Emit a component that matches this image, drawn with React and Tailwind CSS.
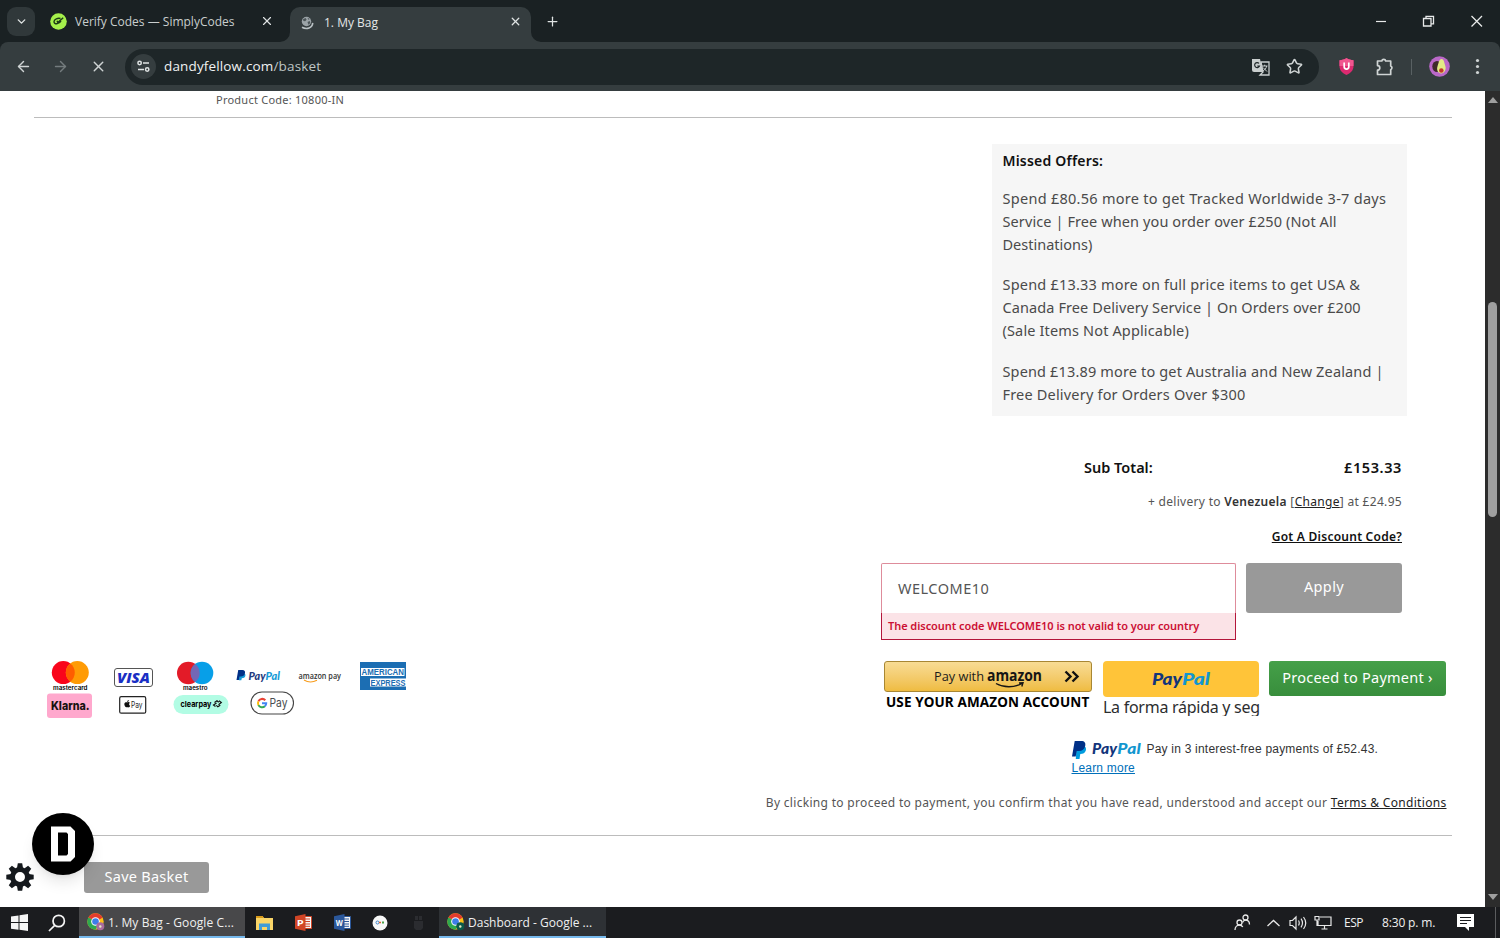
import { ChevronDown, X, Plus, ArrowLeft, ArrowRight, Star } from 'lucide-react'

const offers = [
  {
    id: 1,
    lines: [
      ['Spend £80.56 more to get Tracked Worldwide 3-7 days', 'tracking-[0.28px]'],
      ['Service | Free when you order over £250 (Not All', 'tracking-[0.1px]'],
      ['Destinations)', 'tracking-[0px]'],
    ],
  },
  {
    id: 2,
    lines: [
      ['Spend £13.33 more on full price items to get USA &', 'tracking-[0.2px]'],
      ['Canada Free Delivery Service | On Orders over £200', 'tracking-[0.1px]'],
      ['(Sale Items Not Applicable)', 'tracking-[0.15px]'],
    ],
  },
  {
    id: 3,
    lines: [
      ['Spend £13.89 more to get Australia and New Zealand |', 'tracking-[0.15px]'],
      ['Free Delivery for Orders Over $300', 'tracking-[0.19px]'],
    ],
  },
]

function TitleBar() {
  return (
    <div className="flex h-[42px] bg-[#1a2123] text-[12px] text-[#dfe3e3]">
      <div className="ml-[7px] mt-[7px] flex h-[29px] w-[28px] items-center justify-center rounded-[9px] bg-[#30383a]">
        <ChevronDown size={13} strokeWidth={2.6} />
      </div>
      <div className="ml-[15px] flex h-[42px] w-[240px] items-center">
        <svg width="17" height="17" viewBox="0 0 17 17">
          <circle cx="8.5" cy="8.5" r="8.3" fill="#a5f04b" />
          <path d="M10.500 5.500C8 4.800 4 6 4 8.800c0 3 5.300 2.600 7-.8M7 7.800l.8 1.800 5.400-4.800" fill="none" stroke="#1c3a16" strokeWidth="1.4" />
        </svg>
        <span className="ml-[8px] mt-[2px] w-[185px] whitespace-nowrap text-[#c9cece]">Verify Codes — SimplyCodes</span>
        <X size={14} strokeWidth={2} />
      </div>
      <div className="relative mt-[7px] flex h-[35px] w-[241px] items-center rounded-t-[10px] bg-[#353d3f] pb-[6px]">
        <svg className="absolute -left-[10px] bottom-0" width="10" height="10" viewBox="0 0 10 10">
          <path d="M10 0v10H0A10 10 0 0 0 10 0" fill="#353d3f" />
        </svg>
        <svg className="absolute -right-[10px] bottom-0" width="10" height="10" viewBox="0 0 10 10">
          <path d="M0 0v10h10A10 10 0 0 1 0 0" fill="#353d3f" />
        </svg>
        <svg className="ml-[11px] mt-[3px]" width="13" height="14" viewBox="0 0 13 14">
          <circle cx="5.5" cy="5.5" r="4.7" fill="#9ba3a7" />
          <path d="M2 3.3l2.6-1.2 1 1.6-1.5 1.6-1.7-.3zM6.5 6l2.2-1 .6 2-1.8 1.8zM6.5 1.7l2.2 1.3-1.3.7z" fill="#4c5558" />
          <path d="M1 11.3c4.6 2.6 10.5.7 10.7-4.4" fill="none" stroke="#b9c1c4" strokeWidth="1.6" />
        </svg>
        <span className="ml-[10px] mt-[3px] w-[185px] text-[#e4e7e7]">1. My Bag</span>
        <X size={13} strokeWidth={2.4} />
      </div>
      <div className="ml-[14px] flex h-[42px] flex-1 items-center">
        <Plus size={15} strokeWidth={2} />
      </div>
      <svg className="mr-[17px] mt-[14px]" width="108" height="14" viewBox="0 0 108 14" fill="none" stroke="#e8eaea">
        <path d="M1 7.5h10" strokeWidth="1.2" />
        <path d="M48.500 4.500h7.500v7.500h-7.500z" strokeWidth="1.3" />
        <path d="M51 4.500V2.300h7.500v7.500H56" strokeWidth="1.3" />
        <path d="M96.500 2l10.500 10.500M107 2L96.500 12.500" strokeWidth="1.3" />
      </svg>
    </div>
  )
}

function ToolBar() {
  return (
    <div className="bg-[#1a2123]">
      <div className="flex h-[49px] items-center rounded-t-[8px] bg-[#353d3f] text-[#cfd4d4]">
        <ArrowLeft className="ml-[15px]" size={17} strokeWidth={2} />
        <ArrowRight className="ml-[20px] text-[#747c7e]" size={17} strokeWidth={2} />
        <X className="ml-[21px]" size={17} strokeWidth={2} />
        <div className="ml-[18px] flex h-[36px] w-[1194px] items-center rounded-full bg-[#1e2628]">
          <div className="ml-[6px] flex size-[25px] items-center justify-center rounded-full bg-[#353d3f]">
            <svg width="13" height="13" viewBox="0 0 13 13" fill="none" stroke="#dfe3e3" strokeWidth="1.5">
              <circle cx="2.600" cy="3" r="1.700" />
              <path d="M6 3h6M1 9.500h6" />
              <circle cx="10.200" cy="9.500" r="1.700" />
            </svg>
          </div>
          <span className="ml-[8px] flex-1 text-[13.5px] tracking-[0.15px] text-[#f0f2f2]">
            dandyfellow.com<span className="text-[#bfc5c5]">/basket</span>
          </span>
          <svg className="mr-[16px]" width="19" height="18" viewBox="0 0 19 18">
            <path d="M1 1h8l3 13H3a2 2 0 0 1-2-2z" fill="#c9cece" />
            <path d="M10 4h8v13H9l3-3z" fill="none" stroke="#c9cece" strokeWidth="1.300" />
            <path d="M8 5.300A2.500 2.500 0 1 0 8.500 8H6.300" fill="none" stroke="#1e2628" strokeWidth="1.200" />
            <path d="M11 8h5.500M13.700 6.700V8M15.700 8c-.5 2.500-2 4-3.700 5M12 9.500l4 4" fill="none" stroke="#c9cece" strokeWidth="1" />
          </svg>
          <Star className="mr-[16px]" size={17} strokeWidth={2.2} strokeLinejoin="miter" />
        </div>
        <svg className="ml-[20px]" width="15" height="17" viewBox="0 0 15 17">
          <path d="M7.500 0C5.500 1.500 3 2 .5 2.300V8c0 4.600 3 7.300 7 9 4-1.700 7-4.400 7-9V2.300C12 2 9.500 1.500 7.500 0" fill="#dc2a70" />
          <path d="M7.500 0C5.500 1.500 3 2 .5 2.300V8h14V2.300C12 2 9.500 1.500 7.500 0" fill="#f0568f" />
          <path d="M5.200 4.500v4.300a2.300 2.300 0 0 0 4.600 0V4.500" fill="none" stroke="#fff" strokeWidth="1.700" />
        </svg>
        <svg className="ml-[22px]" width="19" height="18" viewBox="0 0 19 18">
          <path d="M1.500 3h4.300a2 2 0 0 1 3.900 0h5v5a2 2 0 0 1 0 3.700v4.800H1.500v-4.300a2.300 2.300 0 0 0 0-4.600z" fill="none" stroke="#cfd4d4" strokeWidth="1.700" strokeLinejoin="round" />
        </svg>
        <div className="ml-[16px] h-[16px] w-px bg-[#596163]" />
        <svg className="ml-[17px]" width="21" height="21" viewBox="0 0 21 21">
          <circle cx="10.500" cy="10.500" r="10.300" fill="#ba68c8" />
          <ellipse cx="8" cy="10.500" rx="4.700" ry="5.500" fill="#3f2a2a" />
          <path d="M12.500 3c2.500 0 2.600 3.400 3.700 6.500 1.500 4-1 8-4 8-3.200 0-5-3.800-3.600-7.500C9.700 7 10 3 12.500 3" fill="#e3ec86" />
          <circle cx="12.300" cy="14.500" r="2.300" fill="#c5392b" />
        </svg>
        <svg className="ml-[25px]" width="5" height="17" viewBox="0 0 5 17" fill="#cfd4d4">
          <circle cx="2.500" cy="2.500" r="1.600" />
          <circle cx="2.500" cy="8.500" r="1.600" />
          <circle cx="2.500" cy="14.500" r="1.600" />
        </svg>
      </div>
    </div>
  )
}

function PayPalMark({ className }) {
  return (
    <svg className={className} viewBox="0 0 14 18">
      <path d="M4.500 5h6c3 0 4 2 3.300 4.500-.7 2.500-2.700 3.500-5.500 3.500L7.500 18H3.800z" fill="#009cde" />
      <path d="M2.700 0h6.500c3.500 0 4.700 2 4 5C12.500 8.500 10 10 7 10H4.800L3.700 15.500H0z" fill="#003087" />
    </svg>
  )
}

function PayPalWord({ className }) {
  return (
    <svg className={className} viewBox="0 0 58 19" fontFamily="Lato" fontSize="17" fontWeight="900" fontStyle="italic" overflow="visible">
      <text x="0" y="15" textLength="30" lengthAdjust="spacingAndGlyphs" fill="#12357b">Pay</text>
      <text x="30" y="15" textLength="28" lengthAdjust="spacingAndGlyphs" fill="#1296cf">Pal</text>
    </svg>
  )
}

function CardLogos() {
  return (
    <svg className="-mt-px" width="362" height="60" viewBox="46 660 362 60" fontFamily="Inter, sans-serif">
      <circle cx="63.300" cy="672.600" r="11.500" fill="#f9051b" />
      <circle cx="77.300" cy="672.600" r="11.500" fill="#ff9b05" />
      <path d="M70.300 663.500a11.500 11.500 0 0 1 0 18.200 11.500 11.500 0 0 1 0-18.200" fill="#ff5d00" />
      <text x="53" y="689.500" fontSize="5.500" fontWeight="600" textLength="34.500" lengthAdjust="spacingAndGlyphs">mastercard</text>

      <rect x="114.500" y="668.500" width="38" height="18" rx="2.500" fill="#fff" stroke="#555" />
      <text x="117" y="682.500" fontSize="14" fontWeight="800" fontStyle="italic" fontFamily="Open Sans" textLength="33" lengthAdjust="spacingAndGlyphs" fill="#1a2fc4">VISA</text>

      <circle cx="188.300" cy="673" r="11.300" fill="#e31b28" />
      <circle cx="202" cy="673" r="11.300" fill="#079fe8" />
      <path d="M195.200 664a11.300 11.300 0 0 1 0 18 11.300 11.300 0 0 1 0-18" fill="#7467b5" />
      <text x="183" y="689.500" fontSize="5.500" fontWeight="600" textLength="24.500" lengthAdjust="spacingAndGlyphs">maestro</text>

      <g transform="translate(236.500 670) scale(.64)">
        <path d="M4.500 5h6c3 0 4 2 3.300 4.500-.7 2.500-2.700 3.500-5.500 3.500L7.500 16H3.800z" fill="#179bd7" />
        <path d="M2.700 0h6.500c3.500 0 4.700 2 4 5C12.500 8.500 10 10 7 10H4.800L3.700 15.500H0z" fill="#003087" />
      </g>
      <g fontFamily="Lato" fontSize="10.500" fontWeight="900" fontStyle="italic">
        <text x="248.500" y="680" textLength="17" lengthAdjust="spacingAndGlyphs" fill="#253b80">Pay</text>
        <text x="265.500" y="680" textLength="14.500" lengthAdjust="spacingAndGlyphs" fill="#179bd7">Pal</text>
      </g>

      <text x="298.500" y="678.500" fontSize="8.500" fontWeight="600" fontFamily="Open Sans" textLength="42.500" lengthAdjust="spacingAndGlyphs" fill="#333">amazon pay</text>
      <path d="M304 680c4 2.500 9 2.300 13 .3" fill="none" stroke="#f79c1c" strokeWidth="1.100" />

      <rect x="360" y="662" width="46" height="28" fill="#1c6eb3" />
      <path d="M361 668h43.500v8H361zM370 678.500h36v8h-36z" fill="#fff" />
      <g fontFamily="Liberation Sans" fontWeight="700" fontSize="8.500" fill="#1c6eb3">
        <text x="361.500" y="675" textLength="42.500" lengthAdjust="spacingAndGlyphs">AMERICAN</text>
        <text x="370.500" y="685.500" textLength="35" lengthAdjust="spacingAndGlyphs">EXPRESS</text>
      </g>

      <rect x="47" y="693.500" width="45" height="24.500" rx="3" fill="#ffa8cd" />
      <text x="51" y="710" fontSize="12" fontWeight="800" textLength="38.500" lengthAdjust="spacingAndGlyphs" fill="#17120f">Klarna.</text>

      <rect x="119.700" y="696.700" width="26" height="16.500" rx="1.500" fill="#fff" stroke="#222" strokeWidth="1.200" />
      <path d="M127.300 702.400c.8-.5 2-.4 2.600.3-1.200.8-1 2.400.3 3-.5 1.300-1.300 2-2.200 1.600-.5-.2-.9-.2-1.400 0-1 .4-2.700-1.900-2.200-3.800.4-1.200 1.800-1.600 2.900-1.100m-.2-.4c0-1 .7-1.900 1.700-2 .1 1-.7 2-1.700 2" fill="#111" />
      <text x="131" y="708" fontSize="8.500" textLength="11.500" lengthAdjust="spacingAndGlyphs" fill="#222">Pay</text>

      <rect x="173.500" y="695" width="55" height="19" rx="9.500" fill="#b2fce4" />
      <text x="180.500" y="707" fontSize="8" fontWeight="700" textLength="31" lengthAdjust="spacingAndGlyphs">clearpay</text>
      <path d="M214.500 702.500l2.500-1.700 1.700 1.400M219 700.800l2.300 1.700-2.800 2.200M220.300 705.200l-2.500 1.500-1.500-1.300M215.500 706.500l-2-1.500 3-2" fill="none" stroke="#111" strokeWidth="1.200" />

      <rect x="251" y="692" width="42.500" height="22" rx="11" fill="#fff" stroke="#444" strokeWidth="1.100" />
      <g fill="none" strokeWidth="2">
        <path d="M265.300 700.200a4.200 4.200 0 0 0-6.900 1.200" stroke="#ea4335" />
        <path d="M258.400 701.400a4.200 4.200 0 0 0 0 3.700" stroke="#fbbc04" />
        <path d="M258.400 705.100a4.200 4.200 0 0 0 6.500 1.200" stroke="#34a853" />
        <path d="M264.900 706.300a4.200 4.200 0 0 0 1.300-3h-4.200" stroke="#4285f4" />
      </g>
      <text x="269.500" y="707.300" fontSize="12" textLength="18" lengthAdjust="spacingAndGlyphs" fill="#4a4d50">Pay</text>
    </svg>
  )
}

function MissedOffers() {
  return (
    <div className="ml-[992px] mt-[26px] h-[272px] w-[415px] bg-[#f6f6f6] pl-[10.5px] pt-[5px] text-[14.5px] text-[#4a4a4a]">
      <p className="mb-[14.5px] h-[23px] text-[14px] font-semibold leading-[23px] tracking-[0.2px] text-[#111]">Missed Offers:</p>
      {offers.map((offer) => (
        <p key={offer.id} className="mb-[17.300px] leading-[23.100px]">
          {offer.lines.map(([line, tracking]) => (
            <span key={line} className={`block whitespace-nowrap ${tracking}`}>{line}</span>
          ))}
        </p>
      ))}
    </div>
  )
}

function Totals() {
  return (
    <div className="mr-[83px] flex flex-col items-end">
      <div className="mt-[41px] flex h-[21px] w-[318px] items-center justify-between text-[14.5px] font-semibold text-[#111]">
        <span className="tracking-[0px]">Sub Total:</span>
        <span className="tracking-[0.6px]">£153.33</span>
      </div>
      <p className="mt-[14px] h-[20px] text-[12px] leading-[20px] tracking-[0.31px] text-[#555]">
        + delivery to <b className="font-semibold text-[#333]">Venezuela</b> [<span className="text-[#222] underline">Change</span>] at £24.95
      </p>
      <p className="mt-[15px] h-[20px] text-[12px] font-semibold leading-[20px] tracking-[0.25px] text-[#111] underline">Got A Discount Code?</p>
      <div className="mt-[16px] flex gap-[10px]">
        <div className="w-[355px]">
          <div className="flex h-[50px] items-center rounded-t-[2px] border border-b-0 border-[#de8c9b] pl-[16px] text-[14.5px] tracking-[0.5px] text-[#555]">WELCOME10</div>
          <div className="h-[27px] border border-t-0 border-[#b3163a] bg-[#fbe3e7] pl-[6px] text-[11px] font-semibold leading-[26px] tracking-[-0.05px] text-[#cb1034]">
            The discount code WELCOME10 is not valid to your country
          </div>
        </div>
        <div className="flex h-[50px] w-[156px] items-center justify-center rounded-[3px] bg-[#999] pb-[2px] text-[14.5px] tracking-[0.4px] text-white">Apply</div>
      </div>
    </div>
  )
}

function PaymentRow() {
  return (
    <div className="mt-[21px] flex h-[62px] items-start pl-[46px]">
      <CardLogos />
      <div className="ml-[476px] w-[208px]">
        <div className="flex h-[31px] items-center rounded-[3px] border border-[#a88734] bg-linear-to-b from-[#f8dc94] to-[#efbc40] pl-[49px]">
          <svg width="148" height="26" viewBox="0 0 148 26" fontFamily="Open Sans">
            <text x="0" y="16.500" fontSize="12.500" fontWeight="500" textLength="50" lengthAdjust="spacingAndGlyphs" fill="#1b1b1b">Pay with</text>
            <text x="53" y="16.500" fontSize="15.500" fontWeight="700" textLength="55" lengthAdjust="spacingAndGlyphs" fill="#151515">amazon</text>
            <path d="M62 19.500c8 4.500 18 4.200 26 0M85 19l4-.3-1.200 3.800" fill="none" stroke="#151515" strokeWidth="1.400" />
            <path d="M131.500 7.500l5 5-5 5M138.500 7.500l5 5-5 5" fill="none" stroke="#111" strokeWidth="2.400" />
          </svg>
        </div>
        <p className="pl-[2px] text-[13.5px] font-bold leading-[20px] tracking-[0.15px] whitespace-nowrap text-black">USE YOUR AMAZON ACCOUNT</p>
      </div>
      <div className="ml-[11px] h-[57px] w-[157px] overflow-hidden">
        <div className="flex h-[36px] w-[156px] items-center justify-center rounded-[4px] bg-[#ffc439]">
          <PayPalWord className="h-[19px] w-[58px]" />
        </div>
        <p className="h-[19px] overflow-hidden text-[16px] leading-[21px] tracking-[-0.27px] whitespace-nowrap text-[#2c2e2f]">La forma rápida y seg</p>
      </div>
      <div className="ml-[9px] flex h-[35px] w-[177px] items-center justify-center rounded-[3px] bg-linear-to-b from-[#45a049] to-[#388e3c] pb-[1px] text-[14.5px] tracking-[0.25px] whitespace-nowrap text-white">
        Proceed to Payment ›
      </div>
    </div>
  )
}

function PageFooter() {
  return (
    <>
      <div className="ml-[1071.5px] mt-[17px] h-[38px] font-['Liberation_Sans'] text-[12px] leading-[19px] tracking-[0.21px] text-[#333]">
        <div className="flex h-[19px] items-center">
          <PayPalMark className="h-[18px] w-[14px]" />
          <PayPalWord className="ml-[6px] h-[17px] w-[49px]" />
          <span className="ml-[6px] whitespace-nowrap">Pay in 3 interest-free payments of £52.43.</span>
        </div>
        <span className="block text-[#0070ba] underline">Learn more</span>
      </div>
      <p className="mr-[38.5px] mt-[14px] h-[22px] text-right text-[12px] leading-[22px] tracking-[0.31px] text-[#555]">
        By clicking to proceed to payment, you confirm that you have read, understood and accept our <span className="text-[#222] underline">Terms & Conditions</span>
      </p>
      <div className="ml-[34px] mt-[21px] h-px w-[1418px] bg-[#bcbcbc]" />
      <div className="ml-[84px] mt-[26px] flex h-[31px] w-[125px] items-center justify-center rounded-[3px] bg-[#999] pb-[1px] text-[14.5px] tracking-[0.25px] text-white">Save Basket</div>
    </>
  )
}

function FloatingBadges() {
  return (
    <>
      <div className="absolute left-[32px] top-[722px] flex size-[62px] items-center justify-center rounded-full bg-black shadow-lg">
        <svg width="24" height="36" viewBox="0 0 24 36">
          <path d="M0 .5h19.500L24 5v26l-4.500 4.500H0zM7 6.500v23h8.500l1.500-1.500V8l-1.500-1.500z" fill="#fff" fillRule="evenodd" />
        </svg>
      </div>
      <svg className="absolute left-[6px] top-[772px]" width="28" height="28" viewBox="-14 -14 28 28">
        <circle r="7.500" fill="none" stroke="#15191d" strokeWidth="5" />
        {[0, 45, 90, 135, 180, 225, 270, 315].map((deg) => (
          <path key={deg} transform={`rotate(${deg})`} d="M-3-9l.8-4.700h4.400L3-9z" fill="#15191d" />
        ))}
      </svg>
    </>
  )
}

function ScrollBar() {
  return (
    <div className="flex w-[15px] flex-col items-center bg-[#2c2c2c]">
      <svg className="mt-[6px]" width="10" height="6" viewBox="0 0 10 6"><path d="M5 0l5 6H0z" fill="#9f9f9f" /></svg>
      <div className="mt-[199px] h-[215px] w-[9px] rounded-full bg-[#9f9f9f]" />
      <svg className="mb-[7px] mt-auto" width="10" height="6" viewBox="0 0 10 6"><path d="M5 6l5-6H0z" fill="#9f9f9f" /></svg>
    </div>
  )
}

function ChromeIcon({ badge }) {
  return (
    <svg width="18" height="18" viewBox="0 0 18 18">
      <circle cx="8.500" cy="8.500" r="8.200" fill="#fbc116" />
      <path d="M8.500 8.500L1.400 4.400a8.200 8.200 0 0 1 14.200 0z" fill="#e33b2e" />
      <path d="M8.500 8.500L1.400 4.400a8.200 8.200 0 0 0 7.100 12.300l3.500-6z" fill="#2da94f" />
      <path d="M8.500 4.400h7.100L12 6.500z" fill="#e33b2e" />
      <circle cx="8.500" cy="8.500" r="4.300" fill="#fff" />
      <circle cx="8.500" cy="8.500" r="3.300" fill="#3d7de8" />
      <circle cx="13.300" cy="13.300" r="4" fill={badge} />
      <circle cx="13.300" cy="13.500" r="1.200" fill="#e8ecc0" />
    </svg>
  )
}

function OfficeIcon({ letter, color }) {
  return (
    <svg width="17" height="17" viewBox="0 0 17 17">
      <path d="M9 2.500h7.500v12H9z" fill="#f6f6f6" stroke={color} />
      <path d="M10 5h5M10 7.500h5M10 10h5M10 12.300h5" stroke={color} />
      <path d="M0 2.200L10.500 0v17L0 14.800z" fill={color} />
      <text x="1.700" y="11.800" fontFamily="Open Sans" fontSize="9" fontWeight="700" textLength="7" lengthAdjust="spacingAndGlyphs" fill="#fff">{letter}</text>
    </svg>
  )
}

function TaskBar() {
  return (
    <div className="flex h-[31px] items-center bg-[#1b1c1f] text-[12px] whitespace-nowrap text-[#f0f0f0]">
      <svg className="ml-[11px]" width="17" height="17" viewBox="0 0 17 17" fill="#f5f5f5">
        <path d="M0 2.400l7.500-1v6.700H0zM8.500 1.200L17 0v8.100H8.500zM0 9.100h7.500v6.600L0 14.700zM8.500 9.100H17V17l-8.500-1.200z" />
      </svg>
      <svg className="ml-[20px]" width="18" height="18" viewBox="0 0 18 18" fill="none" stroke="#f5f5f5" strokeWidth="1.700">
        <circle cx="10.700" cy="7" r="5.700" />
        <path d="M6.700 11.300L1 17" />
      </svg>
      <div className="ml-[13px] flex h-[31px] w-[166px] items-center border-b-2 border-[#76b9ed] bg-[#48484a] pl-[8px]">
        <ChromeIcon badge="#a86b9c" />
        <span className="ml-[3px] mt-[2px] tracking-[0.1px]">1. My Bag - Google C...</span>
      </div>
      <svg className="ml-[11px]" width="17" height="16" viewBox="0 0 17 16">
        <path d="M0 1h6.500l1.500 2h9v12H0z" fill="#f9d568" />
        <path d="M0 1h6.500l1.500 2H0z" fill="#d89a1a" />
        <path d="M3 15V8.500h11V15h-3v-3H6v3z" fill="#3f9bd8" />
      </svg>
      <div className="ml-[22px]"><OfficeIcon letter="P" color="#d04526" /></div>
      <div className="ml-[22px]"><OfficeIcon letter="W" color="#2b579a" /></div>
      <svg className="ml-[21px]" width="16" height="16" viewBox="0 0 16 16">
        <circle cx="8" cy="8" r="7.500" fill="#f7f7f7" />
        <circle cx="5.500" cy="7.500" r="1.500" fill="none" stroke="#4285c8" />
        <path d="M7 7.500h2" stroke="#e0632c" strokeWidth="1.500" />
        <path d="M10 7.500h2" stroke="#49a34c" strokeWidth="2" />
      </svg>
      <svg className="ml-[26px]" width="9" height="14" viewBox="0 0 9 14">
        <path d="M1 0h3v4H1zM5 0h3v4H5zM0 5h9v7l-2 2H2l-2-2z" fill="#2b2c30" />
      </svg>
      <div className="ml-[16px] flex h-[31px] w-[167px] items-center border-b-2 border-[#76b9ed] bg-[#2e3135] pl-[8px]">
        <ChromeIcon badge="#0b5a4a" />
        <span className="ml-[3px] mt-[2px]">Dashboard - Google ...</span>
      </div>
      <div className="ml-auto flex items-center">
        <svg width="17" height="17" viewBox="0 0 17 17" fill="none" stroke="#e8e8e8" strokeWidth="1.300">
          <circle cx="5.500" cy="8.500" r="2.500" />
          <path d="M1 16c0-3 2-5 4.500-5 1.500 0 2.500.7 3.300 2" />
          <circle cx="11.500" cy="3.500" r="2.500" />
          <path d="M8.500 8.500c.7-1.500 1.700-2.300 3-2.300 2.300 0 4 1.700 4 4.300" />
        </svg>
        <svg className="ml-[15px]" width="15" height="8" viewBox="0 0 15 8"><path d="M1.500 7l6-5.500 6 5.500" fill="none" stroke="#e8e8e8" strokeWidth="1.300" /></svg>
        <svg className="ml-[8px]" width="19" height="16" viewBox="0 0 19 16" fill="none" stroke="#e8e8e8" strokeWidth="1.200">
          <path d="M1 5.500h2.500L7 2v12l-3.500-3.500H1zM9.500 5.500q1.500 2.500 0 5M12 3.700q3 4.300 0 8.600M14.500 2q4.500 6 0 12" />
        </svg>
        <svg className="ml-[6px]" width="18" height="15" viewBox="0 0 18 15" fill="none" stroke="#e8e8e8" strokeWidth="1.200">
          <path d="M6 2h11v8.500H4V6M7.500 14h6M10.500 10.500V14M1 1.500h4v3.500H1zM3 5v6" />
        </svg>
        <span className="ml-[12px] w-[20px] tracking-[-0.5px]">ESP</span>
        <span className="ml-[18px] w-[55px] tracking-[-0.15px]">8:30 p. m.</span>
        <svg className="ml-[20px]" width="17" height="17" viewBox="0 0 17 17">
          <path d="M0 0h17v13h-5v4l-4-4H0z" fill="#fff" />
          <path d="M3 3.500h11M3 6.500h11M3 9.500h7" stroke="#1b1c1f" strokeWidth="1.200" />
        </svg>
        <div className="ml-[21px] mr-[4px] h-[31px] w-px bg-[#5b5c5e]" />
      </div>
    </div>
  )
}

export default function App() {
  return (
    <div className="flex h-[938px] w-[1500px] flex-col overflow-hidden font-['Open_Sans',sans-serif]">
      <TitleBar />
      <ToolBar />
      <div className="flex h-[816px]">
        <main className="relative w-[1485px] overflow-hidden bg-white font-['Noto_Sans',sans-serif]">
          <p className="ml-[216px] h-[26px] text-[11px] leading-[18px] tracking-[0.24px] text-[#555]">Product Code: 10800-IN</p>
          <div className="ml-[34px] h-px w-[1418px] bg-[#bcbcbc]" />
          <MissedOffers />
          <Totals />
          <PaymentRow />
          <PageFooter />
          <FloatingBadges />
        </main>
        <ScrollBar />
      </div>
      <TaskBar />
    </div>
  )
}
